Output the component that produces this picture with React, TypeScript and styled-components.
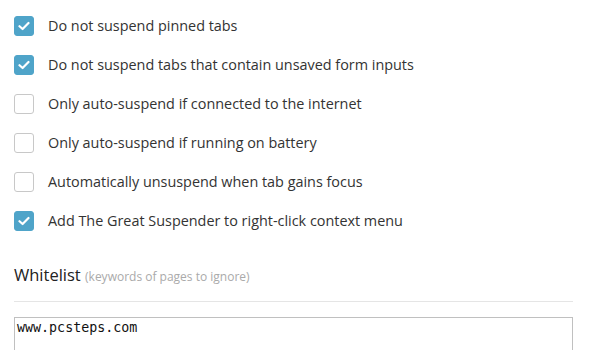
import React from 'react'
import styled, { createGlobalStyle } from 'styled-components'

const GlobalStyle = createGlobalStyle`
    body {
        margin: 0;
        background: #ffffff;
        font-family: 'Open Sans', 'Liberation Sans', sans-serif;
        color: #333333;
    }
`

const OPTIONS = [
    { label: 'Do not suspend pinned tabs', checked: true },
    { label: 'Do not suspend tabs that contain unsaved form inputs', checked: true },
    { label: 'Only auto-suspend if connected to the internet', checked: false },
    { label: 'Only auto-suspend if running on battery', checked: false },
    { label: 'Automatically unsuspend when tab gains focus', checked: false },
    { label: 'Add The Great Suspender to right-click context menu', checked: true },
]

export default function App() {
    return (
        <>
            <GlobalStyle />
            <Page>
                <OptionList>
                    {OPTIONS.map((option) => (
                        <OptionRow key={option.label}>
                            <Box $checked={option.checked}>
                                {option.checked ? <Tick /> : null}
                            </Box>
                            <OptionLabel>{option.label}</OptionLabel>
                        </OptionRow>
                    ))}
                </OptionList>
                <SectionTitle>
                    Whitelist <SectionHint>(keywords of pages to ignore)</SectionHint>
                </SectionTitle>
                <Rule />
                <Whitelist defaultValue="www.pcsteps.com" spellCheck={false} />
            </Page>
        </>
    )
}

function Tick() {
    return (
        <svg width="12" height="10" viewBox="0 0 12 10">
            <path
                d="M1.5 5.2 L4.6 8 L10.5 2"
                fill="none"
                stroke="#ffffff"
                strokeWidth="2.2"
                strokeLinecap="round"
                strokeLinejoin="round"
            />
        </svg>
    )
}

const Page = styled.div`
    padding: 16px 27px 0 14px;
    width: 559px;
`

const OptionList = styled.div`
    display: flex;
    flex-direction: column;
    gap: 19px;
`

const OptionRow = styled.label`
    align-items: center;
    display: flex;
    gap: 14px;
    height: 20px;
`

const Box = styled.span<{ $checked: boolean }>`
    align-items: center;
    background: ${({ $checked }) => ($checked ? '#4fa4c9' : '#ffffff')};
    border: 1px solid ${({ $checked }) => ($checked ? '#4fa4c9' : '#c8c8c8')};
    border-radius: 3px;
    box-sizing: border-box;
    display: flex;
    flex-shrink: 0;
    height: 20px;
    justify-content: center;
    width: 20px;
`

const OptionLabel = styled.span`
    color: #333333;
    font-size: 14.4px;
    line-height: 20px;
`

const SectionTitle = styled.div`
    color: #222222;
    font-size: 16.5px;
    line-height: 22px;
    margin-top: 33px;
`

const SectionHint = styled.span`
    color: #aaaaaa;
    font-size: 12px;
`

const Rule = styled.div`
    background: #e5e5e5;
    height: 1px;
    margin-top: 13px;
`

const Whitelist = styled.textarea`
    border: 1px solid #c0c0c0;
    box-sizing: border-box;
    color: #111111;
    display: block;
    font-family: 'DejaVu Sans Mono', 'Liberation Mono', monospace;
    font-size: 13.33px;
    height: 80px;
    margin-top: 15px;
    outline: none;
    padding: 2px 2px;
    resize: none;
    width: 100%;
`
